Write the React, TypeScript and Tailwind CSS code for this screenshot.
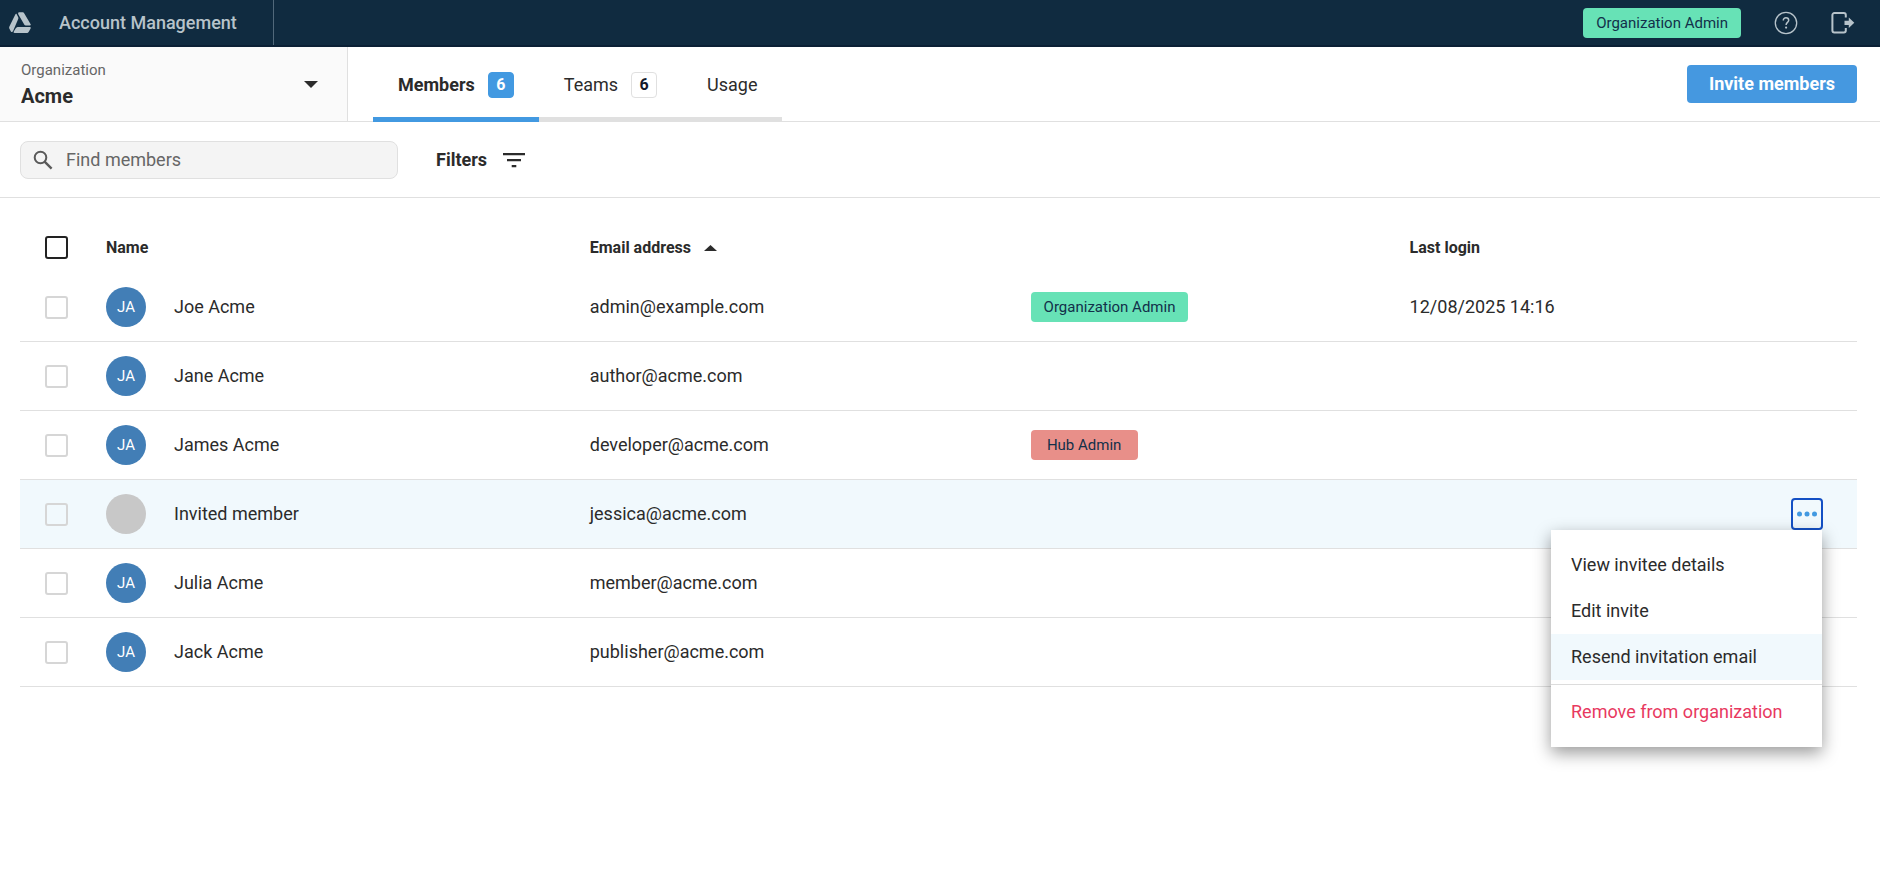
import { useState } from "react";
import clsx from "clsx";

interface Member {
  name: string;
  initials?: string;
  email: string;
  role?: "Organization Admin" | "Hub Admin";
  lastLogin?: string;
  invited?: boolean;
}

const members: Member[] = [
  {
    name: "Joe Acme",
    initials: "JA",
    email: "admin@example.com",
    role: "Organization Admin",
    lastLogin: "12/08/2025 14:16",
  },
  { name: "Jane Acme", initials: "JA", email: "author@acme.com" },
  {
    name: "James Acme",
    initials: "JA",
    email: "developer@acme.com",
    role: "Hub Admin",
  },
  { name: "Invited member", email: "jessica@acme.com", invited: true },
  { name: "Julia Acme", initials: "JA", email: "member@acme.com" },
  { name: "Jack Acme", initials: "JA", email: "publisher@acme.com" },
];

const tabs = [
  { label: "Members", count: 6 },
  { label: "Teams", count: 6 },
  { label: "Usage" },
];

const Logo = () => (
  <svg width="22" height="22" viewBox="0 0 22 22" fill="currentColor">
    <path d="M6.300 2.600C6.700 1.800 7.300 1.600 7.700 2.300l1.500 2.900c.3.600.3 1.100 0 1.700L4.100 18.900c-.6 1.300-1.500 1.600-2.200.500L.4 16.700c-.4-.8-.4-1.500 0-2.300z" />
    <path d="M10.500.3h2.800c1 0 1.600.4 2 1.200l6.200 10.400c.6 1.100.2 1.700-1 1.700h-3c-1.200 0-1.900-.4-2.400-1.400L9.400 2.400C8.800 1.200 9.200.3 10.500.3z" />
    <path d="M9.300 15h11.500c1 0 1.300.6.800 1.500l-1.800 3.200c-.5.900-1.200 1.300-2.200 1.300H5.700c-1.100 0-1.400-.6-.9-1.600l1.800-2.900C7.300 15.500 8.100 15 9.300 15z" />
  </svg>
);

const HelpIcon = () => (
  <svg width="24" height="24" viewBox="0 0 24 24" fill="none" stroke="currentColor">
    <circle cx="12" cy="12" r="10.700" strokeWidth="1.300" />
    <path
      d="M9.300 9.500c0-1.600 1.100-2.700 2.700-2.700s2.700 1 2.700 2.500c0 2-2.600 2.200-2.600 4.600"
      strokeWidth="1.500"
    />
    <circle cx="12.100" cy="16.600" r="1.100" fill="currentColor" stroke="none" />
  </svg>
);

const SignOutIcon = () => (
  <svg width="24" height="22" viewBox="0 0 24 22" fill="none">
    <path
      d="M14.800 5.500V3a2 2 0 0 0-2-2H3.400a2 2 0 0 0-2 2v15.600a2 2 0 0 0 2 2h9.400a2 2 0 0 0 2-2V16"
      stroke="currentColor"
      strokeWidth="2"
    />
    <path d="M13.500 8.700h4.300V5.600l5.500 5.200-5.500 5.200v-3.100h-4.300z" fill="currentColor" />
  </svg>
);

const SearchIcon = () => (
  <svg
    width="20"
    height="20"
    viewBox="0 0 20 20"
    fill="none"
    stroke="currentColor"
    strokeWidth="2"
    className="pointer-events-none absolute left-[13px] top-[9px] text-[#5a5a5a]"
  >
    <circle cx="7.500" cy="7.500" r="5.800" />
    <path d="M11.600 11.600l7 7" strokeWidth="2.400" />
  </svg>
);

const FilterIcon = () => (
  <svg width="22" height="16" viewBox="0 0 22 16" fill="currentColor">
    <path d="M0 1h22v2.200H0zM4 7h14v2.200H4zM8.700 13h4.600v2.200H8.700z" />
  </svg>
);

const RoleBadge = ({ role }: { role: string }) => (
  <span
    className={clsx(
      "inline-flex h-[30px] min-w-[107px] items-center justify-center rounded px-[13px] text-[15px] text-[#12304a]",
      role === "Hub Admin" ? "bg-[#e88f89]" : "bg-[#67e2b6]"
    )}
  >
    {role}
  </span>
);

const InviteMenu = () => (
  <div
    role="menu"
    className="absolute right-px top-full z-10 w-[271px] bg-white py-3 text-left shadow-[0_6px_16px_rgba(0,0,0,0.4)]"
  >
    {["View invitee details", "Edit invite", "Resend invitation email"].map(
      (item) => (
        <button
          key={item}
          type="button"
          role="menuitem"
          className={clsx(
            "block h-[46px] w-full px-5 text-left hover:bg-[#f1f9fd]",
            item === "Resend invitation email" && "bg-[#f1f9fd]"
          )}
        >
          {item}
        </button>
      )
    )}
    <hr className="my-1 border-[#dcdcdc]" />
    <button
      type="button"
      role="menuitem"
      className="block h-[46px] w-full px-5 text-left text-[#e8395f]"
    >
      Remove from organization
    </button>
  </div>
);

const checkboxClass =
  "block size-[23px] appearance-none rounded-[3px] border-2 checked:bg-[#4299e1]";

const MemberRow = ({ member }: { member: Member }) => {
  const [menuOpen, setMenuOpen] = useState(!!member.invited);

  return (
    <tr
      className={clsx(
        "h-[69px] *:border-b *:border-[#e0e0e0]",
        member.invited && "bg-[#f1f9fd]"
      )}
    >
      <td className="pl-[25px]">
        <input
          type="checkbox"
          aria-label={`Select ${member.email}`}
          className={clsx(checkboxClass, "border-[#d6d6d6]")}
        />
      </td>
      <td>
        <div className="flex items-center gap-7">
          <span
            className={clsx(
              "flex size-10 shrink-0 items-center justify-center rounded-full text-[15px] text-white",
              member.invited ? "bg-[#c8c8c8]" : "bg-[#427eb6]"
            )}
          >
            {member.initials}
          </span>
          {member.name}
        </div>
      </td>
      <td>{member.email}</td>
      <td>{member.role && <RoleBadge role={member.role} />}</td>
      <td>{member.lastLogin}</td>
      <td className="pr-[34px]">
        {member.invited && (
          <div className="relative ml-auto w-8">
            <button
              type="button"
              aria-label="Member actions"
              aria-haspopup="menu"
              aria-expanded={menuOpen}
              onClick={() => setMenuOpen(!menuOpen)}
              className="flex size-8 items-center justify-center rounded border-2 border-[#1450c4] text-[#4299e1]"
            >
              <svg width="20" height="6" viewBox="0 0 20 6" fill="currentColor" className="shrink-0">
                <circle cx="2.500" cy="3" r="2.500" />
                <circle cx="10" cy="3" r="2.500" />
                <circle cx="17.500" cy="3" r="2.500" />
              </svg>
            </button>
            {menuOpen && <InviteMenu />}
          </div>
        )}
      </td>
    </tr>
  );
};

export default function App() {
  const [active, setActive] = useState("Members");

  return (
    <div className="min-h-screen bg-white font-['Roboto',sans-serif] text-[18px] leading-6 text-[#2b2b2b]">
      <header className="flex h-[47px] items-center border-b-2 border-[#0b2035] bg-[#102b40] text-[#b7c3ca]">
        <div className="flex h-full w-[274px] items-center border-r border-[#51687a] pl-[9px]">
          <Logo />
          <span className="ml-7 font-medium">Account Management</span>
        </div>
        <div className="ml-auto flex items-center pr-[25px]">
          <RoleBadge role="Organization Admin" />
          <button type="button" aria-label="Help" className="ml-[33px]">
            <HelpIcon />
          </button>
          <button type="button" aria-label="Sign out" className="ml-[33px]">
            <SignOutIcon />
          </button>
        </div>
      </header>

      <div className="flex h-[75px] border-b border-[#e0e0e0]">
        <div className="relative w-[348px] border-r border-[#e0e0e0] bg-[#fafafa] px-[21px] pt-[11px]">
          <label htmlFor="organization" className="block text-[15px] text-[#666]">
            Organization
          </label>
          <select
            id="organization"
            className="block h-7 w-full appearance-none bg-transparent text-xl font-bold"
          >
            <option>Acme</option>
          </select>
          <svg
            width="14"
            height="7"
            viewBox="0 0 14 7"
            fill="currentColor"
            className="pointer-events-none absolute right-[29px] top-[34px]"
          >
            <path d="M0 0h14L7 7z" />
          </svg>
        </div>
        <nav className="-mb-px ml-[25px] flex">
          {tabs.map((tab) => (
            <button
              key={tab.label}
              type="button"
              onClick={() => setActive(tab.label)}
              className={clsx(
                "flex items-center gap-[13px] border-b-[5px] px-[25px] pt-[6px]",
                active === tab.label
                  ? "border-[#4299e1] font-bold"
                  : "border-[#e0e0e0]"
              )}
            >
              {tab.label}
              {tab.count && (
                <span
                  className={clsx(
                    "flex size-[26px] items-center justify-center rounded border text-base font-bold",
                    active === tab.label
                      ? "border-[#4299e1] bg-[#4299e1] text-white"
                      : "border-[#e0e0e0] text-[#12182b]"
                  )}
                >
                  {tab.count}
                </span>
              )}
            </button>
          ))}
        </nav>
        <button
          type="button"
          className="ml-auto mr-[23px] h-[38px] self-center rounded bg-[#4598e0] px-[22px] font-bold text-white"
        >
          Invite members
        </button>
      </div>

      <div className="flex h-[76px] items-center border-b border-[#e0e0e0] pl-5">
        <div className="relative w-[378px]">
          <SearchIcon />
          <input
            type="search"
            aria-label="Find members"
            placeholder="Find members"
            className="block h-[38px] w-full rounded-lg border border-[#e0e0e0] bg-[#f4f4f4] pl-[45px] pr-3 placeholder:text-[#666]"
          />
        </div>
        <button type="button" className="ml-[38px] flex items-center gap-4 font-bold">
          Filters
          <FilterIcon />
        </button>
      </div>

      <main className="pl-5 pr-[23px] pt-6">
        <table className="w-full table-fixed border-separate border-spacing-0 text-left">
          <colgroup>
            <col className="w-[86px]" />
            <col />
            <col className="w-[24%]" />
            <col className="w-[379px]" />
            <col className="w-[20%]" />
            <col className="w-20" />
          </colgroup>
          <thead>
            <tr className="h-[51px] text-base">
              <th className="pl-[25px]">
                <input
                  type="checkbox"
                  aria-label="Select all members"
                  className={clsx(checkboxClass, "border-[#222]")}
                />
              </th>
              <th>Name</th>
              <th>
                <button type="button" className="flex items-center gap-[13px]">
                  Email address
                  <svg width="13" height="6" viewBox="0 0 13 6" fill="currentColor">
                    <path d="M6.500 0l6.500 6H0z" />
                  </svg>
                </button>
              </th>
              <th />
              <th>Last login</th>
              <th />
            </tr>
          </thead>
          <tbody>
            {members.map((member) => (
              <MemberRow key={member.email} member={member} />
            ))}
          </tbody>
        </table>
      </main>
    </div>
  );
}
